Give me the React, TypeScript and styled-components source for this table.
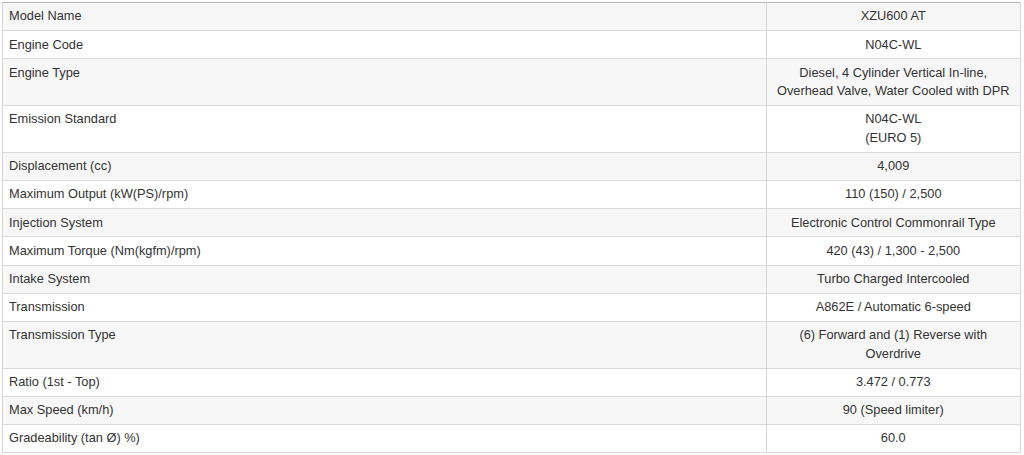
import React from "react";
import styled, { createGlobalStyle } from "styled-components";

const GlobalStyle = createGlobalStyle`
	html, body {
		margin: 0;
		padding: 0;
		background: #ffffff;
	}
	body {
		font-family: "Liberation Sans", Arial, sans-serif;
	}
`;

const Page = styled.div`
	padding: 2px 3px 0 2px;
	background: #ffffff;
`;

const Table = styled.table`
	width: 100%;
	border-collapse: collapse;
	border-top: 1px solid #b5b5b5;
	border-left: 1px solid #d6d6d6;
	border-right: 1px solid #d6d6d6;
	font-size: 12.8px;
	line-height: 18.5px;
	color: #333333;
	table-layout: fixed;
`;

const Col = styled.col<{ $w: string }>`
	width: ${(p) => p.$w};
`;

const Row = styled.tr<{ $shade: boolean }>`
	background: ${(p) => (p.$shade ? "#f7f7f7" : "#ffffff")};
	border-bottom: 1px solid #d9d9d9;
`;

const Label = styled.td`
	padding: 4.4px 6px 4.3px 6px;
	vertical-align: top;
	text-align: left;
	border-right: 1px solid #d6d6d6;
`;

const Value = styled.td`
	padding: 4.4px 6px 4.3px 6px;
	vertical-align: top;
	text-align: center;
`;

const specs: [string, string[]][] = [
	["Model Name", ["XZU600 AT"]],
	["Engine Code", ["N04C-WL"]],
	["Engine Type", ["Diesel, 4 Cylinder Vertical In-line,", "Overhead Valve, Water Cooled with DPR"]],
	["Emission Standard", ["N04C-WL", "(EURO 5)"]],
	["Displacement (cc)", ["4,009"]],
	["Maximum Output (kW(PS)/rpm)", ["110 (150) / 2,500"]],
	["Injection System", ["Electronic Control Commonrail Type"]],
	["Maximum Torque (Nm(kgfm)/rpm)", ["420 (43) / 1,300 - 2,500"]],
	["Intake System", ["Turbo Charged Intercooled"]],
	["Transmission", ["A862E / Automatic 6-speed"]],
	["Transmission Type", ["(6) Forward and (1) Reverse with", "Overdrive"]],
	["Ratio (1st - Top)", ["3.472 / 0.773"]],
	["Max Speed (km/h)", ["90 (Speed limiter)"]],
	["Gradeability (tan Ø) %)", ["60.0"]],
];

const App = () => (
	<>
		<GlobalStyle />
		<Page>
			<Table>
				<colgroup>
					<Col $w="75%" />
					<Col $w="25%" />
				</colgroup>
				<tbody>
					{specs.map(([name, lines], i) => (
						<Row key={name} $shade={i % 2 === 0}>
							<Label>{name}</Label>
							<Value>
								{lines.map((l, j) => (
									<React.Fragment key={j}>
										{j > 0 && <br />}
										{l}
									</React.Fragment>
								))}
							</Value>
						</Row>
					))}
				</tbody>
			</Table>
		</Page>
	</>
);

export default App;
